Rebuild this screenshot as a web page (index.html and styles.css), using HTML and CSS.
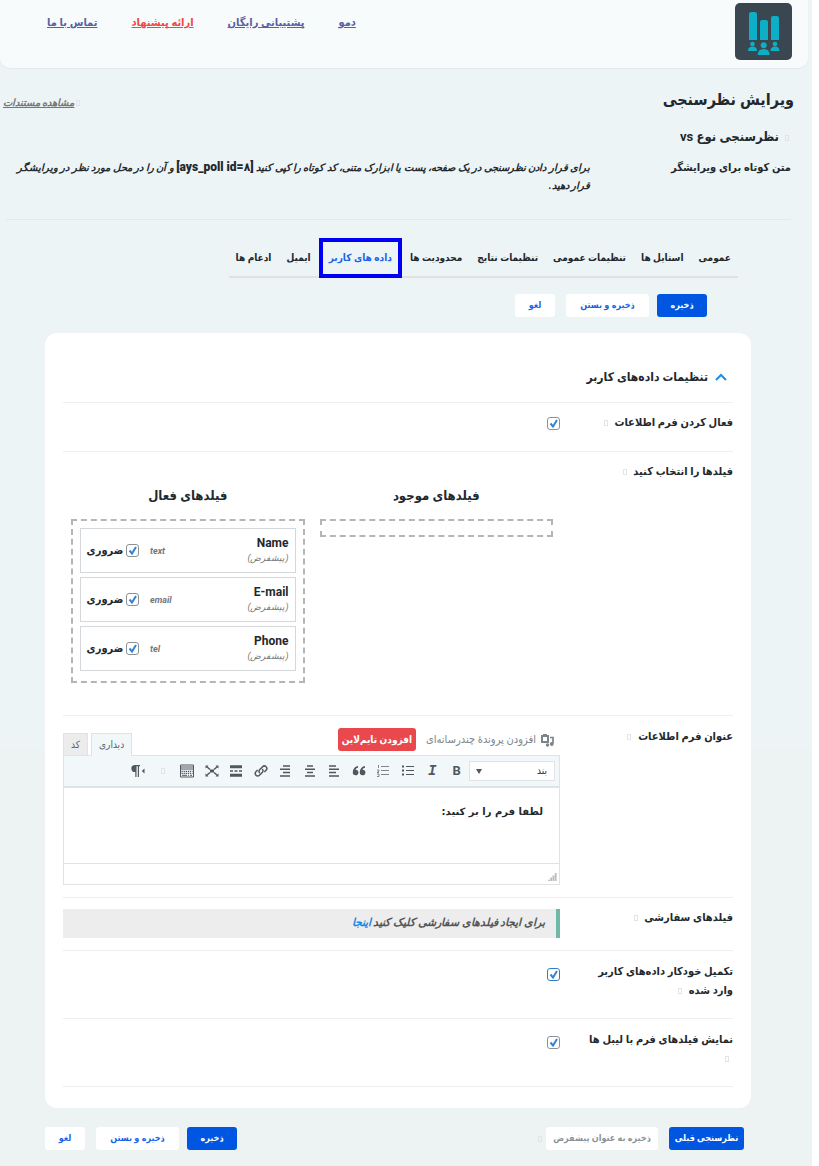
FILE: index.html
```html
<!DOCTYPE html>
<html lang="fa" dir="rtl">
  <head>
    <meta charset="UTF-8" />
    <meta name="viewport" content="width=device-width, initial-scale=1.0" />
    <title>ویرایش نظرسنجی</title>
    <link rel="stylesheet" href="styles.css">
  </head>
  <body>
    <div class="page">
      <header class="top-bar">
        <svg class="logo" viewBox="0 0 57 57" aria-hidden="true">
          <rect width="57" height="57" rx="5" fill="#3a4650" />
          <g fill="#0cafc6">
            <path d="M14 37V11q0-2 2-2h4q2 0 2 2v26z" />
            <path d="M25 37V19q0-2 2-2h4q2 0 2 2v18z" />
            <path d="M36 37V15q0-2 2-2h4q2 0 2 2v22z" />
            <circle cx="17.500" cy="41" r="2.300" />
            <path d="M13 48q0-4.500 4.500-4.500T22 48z" />
            <circle cx="40" cy="41" r="2.300" />
            <path d="M35.500 48q0-4.500 4.500-4.500t4.500 4.500z" />
            <circle cx="28.700" cy="42.300" r="3" />
            <path d="M22.700 52q0-6 6-6t6 6z" />
          </g>
        </svg>
        <nav class="top-nav">
          <a href="#demo">دمو</a>
          <a href="#support">پشتیبانی رایگان</a>
          <a href="#suggest" class="highlight">ارائه پیشنهاد</a>
          <a href="#contact">تماس با ما</a>
        </nav>
      </header>

      <div class="title-row">
        <h1>ویرایش نظرسنجی</h1>
        <p class="docs"><i class="hint"></i><a href="#docs">مشاهده مستندات</a></p>
      </div>

      <section class="intro">
        <h2><i class="hint"></i>نظرسنجی نوع vs</h2>
        <div class="shortcode">
          <h3>متن کوتاه برای ویرایشگر</h3>
          <p>برای قرار دادن نظرسنجی در یک صفحه، پست یا ابزارک متنی، کد کوتاه را کپی کنید <b dir="ltr">[ays_poll id=۸]</b> و آن را در محل مورد نظر در ویرایشگر قرار دهید.</p>
        </div>
      </section>

      <nav class="tabs">
        <a href="#general">عمومی</a>
        <a href="#styles">استایل ها</a>
        <a href="#settings">تنظیمات عمومی</a>
        <a href="#results">تنظیمات نتایج</a>
        <a href="#limits">محدودیت ها</a>
        <a href="#userdata" class="active">داده های کاربر</a>
        <a href="#email">ایمیل</a>
        <a href="#integrations">ادغام ها</a>
      </nav>

      <div class="actions top-actions">
        <button type="button" class="btn primary">ذخیره</button>
        <button type="button" class="btn wide">ذخیره و بستن</button>
        <button type="button" class="btn">لغو</button>
      </div>

      <main class="card">
        <h2 class="card-title">
          <svg viewBox="0 0 12 8" aria-hidden="true"><path d="M1 7l5-5 5 5" /></svg>
          تنظیمات داده‌های کاربر
        </h2>

        <div class="row">
          <label class="row-label" for="enableForm">فعال کردن فرم اطلاعات <i class="hint"></i></label>
          <div><input type="checkbox" id="enableForm" checked /></div>
        </div>

        <div class="row fields-row">
          <div class="row-label">فیلدها را انتخاب کنید <i class="hint"></i></div>
          <div class="fields">
            <section>
              <h3>فیلدهای موجود</h3>
              <div class="drop-zone"></div>
            </section>
            <section>
              <h3>فیلدهای فعال</h3>
              <div class="drop-zone filled">
                <div class="field">
                  <div class="field-name"><b>Name</b><small>(پیشفرض)</small></div>
                  <em>text</em>
                  <label><input type="checkbox" checked /> ضروری</label>
                </div>
                <div class="field">
                  <div class="field-name"><b>E-mail</b><small>(پیشفرض)</small></div>
                  <em>email</em>
                  <label><input type="checkbox" checked /> ضروری</label>
                </div>
                <div class="field">
                  <div class="field-name"><b>Phone</b><small>(پیشفرض)</small></div>
                  <em>tel</em>
                  <label><input type="checkbox" checked /> ضروری</label>
                </div>
              </div>
            </section>
          </div>
        </div>

        <div class="row editor-row">
          <label class="row-label" for="formTitle">عنوان فرم اطلاعات <i class="hint"></i></label>
          <div class="editor">
            <div class="editor-head">
              <button type="button" class="media">
                <svg viewBox="0 0 14 14" aria-hidden="true">
                  <path fill="none" stroke="currentColor" stroke-width="2" d="M2 3h6v6H2z" />
                  <path fill="currentColor" d="M3 1h4v2H3z" />
                  <path fill="none" stroke="currentColor" stroke-width="1.700" d="M10 4.500h3v6" />
                  <circle cx="11.800" cy="11" r="1.900" fill="currentColor" />
                  <circle cx="7.500" cy="12" r="1.700" fill="currentColor" />
                </svg>
                افزودن پروندهٔ چندرسانه‌ای
              </button>
              <button type="button" class="timeline">افزودن تایم‌لاین</button>
              <div class="modes">
                <button type="button" class="current">دیداری</button>
                <button type="button">کد</button>
              </div>
            </div>
            <div class="toolbar">
              <select aria-label="بند">
                <option>بند</option>
              </select>
              <div class="tools">
                <button type="button" aria-label="Bold" class="bold">B</button>
                <button type="button" aria-label="Italic" class="italic">I</button>
                <button type="button" aria-label="Bullets"><svg viewBox="0 0 14 14"><path stroke-width="1" d="M5 2.500h8M5 6.500h8M5 10.500h8" /><path stroke-width="2" d="M1 2.500h2M1 6.500h2M1 10.500h2" /></svg></button>
                <button type="button" aria-label="Numbers"><svg viewBox="0 0 14 14" opacity=".7"><path stroke-width="1" d="M5 2.500h8M5 6.500h8M5 10.500h8M2.500 1v3M1 6h2v1L1 8.500h2M1 10h2v2.500H1" /></svg></button>
                <button type="button" aria-label="Quote"><svg viewBox="0 0 14 14"><path fill="currentColor" stroke="none" d="M6 2C3 2.500 .8 5 .8 8.500A2.800 2.800 0 1 0 3.600 5.700c.2-1 1-1.700 2.400-2zM13 2C10 2.500 7.800 5 7.800 8.500a2.800 2.800 0 1 0 2.800-2.800c.2-1 1-1.700 2.400-2z" /></svg></button>
                <button type="button" aria-label="Left"><svg viewBox="0 0 14 14"><path d="M2 2h7M2 5.300h10M2 8.600h7M2 12h10" /></svg></button>
                <button type="button" aria-label="Center"><svg viewBox="0 0 14 14"><path d="M4 2h6M2 5.300h10M4 8.600h6M2 12h10" /></svg></button>
                <button type="button" aria-label="Right"><svg viewBox="0 0 14 14"><path d="M5 2h7M2 5.300h10M5 8.600h7M2 12h10" /></svg></button>
                <button type="button" aria-label="Link"><svg viewBox="0 0 14 14"><path d="M5.800 9a2.200 2.200 0 0 1-.2-3.200l3-3a2.400 2.400 0 0 1 3.500 3.400L10.300 8M8.200 5a2.200 2.200 0 0 1 .2 3.200l-3 3a2.400 2.400 0 0 1-3.500-3.400L3.700 6" /></svg></button>
                <button type="button" aria-label="More"><svg viewBox="0 0 14 14"><path stroke-width="3" d="M1 2.800h12M1 11.200h12" /><path stroke-width="1.300" d="M1 7h3M5.500 7h3M10 7h3" /></svg></button>
                <button type="button" aria-label="Fullscreen"><svg viewBox="0 0 14 14"><path d="M1.500 2.500L5 5.500M12.500 2.500L9 5.500M1.500 11.500L5 8.500M12.500 11.500L9 8.500" /><path fill="currentColor" stroke="none" d="M5 5.500h4v3H5zM.5 1.500h3l-3 3zM13.500 1.500h-3l3 3zM.5 12.500h3l-3-3zM13.500 12.500h-3l3-3z" /></svg></button>
                <button type="button" aria-label="Toolbar"><svg viewBox="0 0 14 14"><path stroke-width="1" d="M.5 1h13v12H.5zM1 3h12M1 5h12" /><path stroke-width="1.300" stroke-dasharray="1.300 .8" d="M1.500 7.300h11M1.500 9.300h11" /><path stroke-width="1" d="M2 11.300h5M8 11.300h1M10 11.300h2" /></svg></button>
                <button type="button" aria-label="Help"><i class="hint"></i></button>
                <button type="button" aria-label="Direction"><svg viewBox="0 0 14 14"><path fill="currentColor" stroke="none" d="M3.500 1H9v1.300H8V13H6.800V2.300H5.500V13H4.300V8A3.500 3.500 0 0 1 3.500 1zM13.500 4.500v5L10.800 7z" /></svg></button>
              </div>
            </div>
            <textarea id="formTitle">لطفا فرم را بر کنید:</textarea>
            <div class="status">
              <svg viewBox="0 0 10 10" aria-hidden="true"><path d="M1 10V8.500M3.500 10V6M6 10V4M8.500 10V1" /></svg>
            </div>
          </div>
        </div>

        <div class="row custom-row">
          <div class="row-label">فیلدهای سفارشی <i class="hint"></i></div>
          <p class="note">برای ایجاد فیلدهای سفارشی کلیک کنید <a href="#custom">اینجا</a></p>
        </div>

        <div class="row tall-row">
          <label class="row-label" for="autofill">تکمیل خودکار داده‌های کاربر وارد شده <i class="hint"></i></label>
          <div><input type="checkbox" id="autofill" class="focused" checked /></div>
        </div>

        <div class="row tall-row">
          <label class="row-label" for="showLabels">نمایش فیلدهای فرم با لیبل ها <i class="hint"></i></label>
          <div><input type="checkbox" id="showLabels" checked /></div>
        </div>
      </main>

      <footer class="bottom">
        <div class="actions">
          <button type="button" class="btn primary previous">نظرسنجی قبلی</button>
          <button type="button" class="btn default" disabled>ذخیره به عنوان پیشفرض</button>
          <i class="hint"></i>
        </div>
        <div class="actions">
          <button type="button" class="btn primary">ذخیره</button>
          <button type="button" class="btn wide">ذخیره و بستن</button>
          <button type="button" class="btn">لغو</button>
        </div>
      </footer>
    </div>
  </body>
</html>
```
FILE: styles.css
```css
* {
  box-sizing: border-box;
}

body {
  margin: 0;
  background: #ffffff;
  color: #23282d;
  font-family: Roboto, "DejaVu Sans Condensed", "DejaVu Sans", sans-serif;
  font-size: 11px;
  line-height: 18px;
}

h1,
h2,
h3,
p {
  margin: 0;
}

a {
  color: inherit;
}

button,
select,
textarea {
  font: inherit;
  color: inherit;
}

button {
  border: none;
  background: none;
  padding: 0;
  white-space: nowrap;
  cursor: pointer;
}

.page {
  min-height: 100vh;
  margin-right: 7px;
  padding-bottom: 16px;
  background: linear-gradient(#ecf4f6 750px, #edf2f3 750px);
}

/* small empty help marker */
.hint {
  display: inline-block;
  width: 4px;
  height: 6px;
  margin: 0 4px;
  border: 1px solid #e1e5e7;
}

.top-bar {
  display: flex;
  justify-content: space-between;
  height: 68px;
  margin-right: 4px;
  padding: 3px 16px 0 47px;
  background: #f8fbfc;
  border-radius: 0 0 10px 10px;
  box-shadow: 0 1px 1px #e4eaec;
}

.logo {
  width: 57px;
  height: 57px;
}

.top-nav {
  display: flex;
  gap: 34px;
  padding-top: 11px;
  color: #5961a5;
  font-size: 11px;
  font-weight: bold;
  white-space: nowrap;
}

.top-nav .highlight {
  color: #f04747;
}

.title-row {
  display: flex;
  justify-content: space-between;
  align-items: flex-end;
  padding: 20px 18px 0 3px;
}

.title-row h1 {
  font-size: 16px;
  line-height: 24px;
}

.docs {
  color: #777777;
  font-size: 10px;
  font-style: italic;
  font-weight: bold;
}

.docs .hint {
  margin: 0 2px;
}

.intro {
  margin: 0 21px 0 6px;
  padding: 16px 0 24px;
  border-bottom: 1px solid #e4e8ea;
}

.intro h2 {
  font-size: 13px;
}

.intro h2 .hint {
  margin: 0 2px 0 6px;
}

.shortcode {
  display: grid;
  grid-template-columns: 201px 1fr;
  margin-top: 13px;
  padding-left: 4px;
}

.shortcode h3 {
  font-size: 11px;
}

.shortcode p {
  font-size: 10px;
  font-style: italic;
  font-weight: bold;
}

.shortcode b {
  font-size: 12px;
  font-style: normal;
  line-height: 16px;
}

.tabs {
  display: flex;
  gap: 1px;
  width: fit-content;
  height: 40px;
  margin: 18px 74px 0 0;
  border-bottom: 2px solid #e2e0e0;
  font-size: 10px;
  font-weight: bold;
  white-space: nowrap;
}

.tabs a {
  padding: 11px 7px;
  text-decoration: none;
}

.tabs .active {
  height: 40px;
  padding: 7px 6px;
  border: 4px solid #0000f5;
  color: #1a63e8;
}

.actions {
  display: flex;
  align-items: center;
}

.top-actions {
  margin: 16px 105px 16px 0;
}

.btn {
  min-width: 40px;
  height: 23px;
  margin-left: 11px;
  padding: 0 5px;
  border-radius: 3px;
  background: #ffffff;
  color: #1a63e8;
  font-size: 9px;
  font-weight: bold;
  line-height: 23px;
}

.btn:last-child {
  margin-left: 0;
}

.btn.primary {
  min-width: 50px;
  margin-left: 8px;
  background: #0056e0;
  color: #ffffff;
}

.btn.wide {
  min-width: 83px;
}

.btn.previous {
  min-width: 75px;
  margin-left: 11px;
}

.btn.default {
  min-width: 112px;
  margin-left: 0;
  color: #8a9297;
}

.card {
  margin: 0 61px 0 45px;
  padding: 23px 18px 21px;
  border-radius: 12px;
  background: #ffffff;
}

.card-title {
  display: flex;
  align-items: center;
  gap: 7px;
  height: 47px;
  padding: 0 6px 4px 0;
  border-bottom: 1px solid #eeeeee;
  font-size: 12px;
}

.card-title svg {
  width: 12px;
  height: 8px;
  fill: none;
  stroke: #1a8fe8;
  stroke-width: 2;
}

.row {
  display: grid;
  grid-template-columns: 173px 1fr;
  min-height: 49px;
  padding-top: 11px;
  border-bottom: 1px solid #eeeeee;
}

.row-label {
  padding-left: 18px;
  font-size: 11px;
  font-weight: bold;
}

input[type="checkbox"] {
  appearance: none;
  width: 13px;
  height: 13px;
  margin: 0;
  border: 1px solid #8c9196;
  border-radius: 3px;
  background: #ffffff;
  vertical-align: middle;
}

input[type="checkbox"]:checked {
  background-image: url("data:image/svg+xml,%3Csvg xmlns='http://www.w3.org/2000/svg' viewBox='0 0 11 11'%3E%3Cpath d='M2.500 5.500l2.500 3 4-6.500' fill='none' stroke='%233582d4' stroke-width='2'/%3E%3C/svg%3E");
}

input[type="checkbox"].focused {
  border-color: #2f7fc8;
}

.fields-row {
  min-height: 264px;
}

.fields {
  display: grid;
  grid-template-columns: 1fr 1fr;
  gap: 15px;
  padding: 23px 7px 32px 8px;
}

.fields h3 {
  margin-bottom: 13px;
  font-size: 13px;
  line-height: 20px;
  text-align: center;
}

.drop-zone {
  padding: 7px;
  border: 2px dashed #b1b6ba;
}

.filled {
  display: grid;
  gap: 4px;
  padding: 7px 7px 10px;
}

.field {
  display: grid;
  grid-template-columns: 1fr 32px 52px;
  gap: 11px;
  align-items: center;
  height: 45px;
  padding: 0 6px;
  border: 1px solid #d5d8da;
}

.field-name b,
.field-name small {
  display: block;
  line-height: 15px;
}

.field-name b {
  font-size: 12px;
}

.field small,
.field em {
  color: #777777;
  font-size: 9px;
  font-style: italic;
}

.field em {
  direction: ltr;
  font-weight: bold;
}

.field label {
  font-size: 11px;
  font-weight: bold;
  white-space: nowrap;
}

.editor-row {
  padding-top: 12px;
}

.editor {
  padding-bottom: 12px;
}

.editor-head {
  display: flex;
  align-items: flex-start;
  gap: 10px;
  padding-right: 6px;
}

.media {
  display: flex;
  align-items: center;
  gap: 4px;
  height: 23px;
  color: #7c858b;
  font-size: 11px;
}

.media svg {
  width: 14px;
  height: 14px;
}

.timeline {
  height: 23px;
  padding: 0 4px;
  border-radius: 3px;
  background: #e9494c;
  color: #ffffff;
  font-size: 10px;
  font-weight: bold;
}

.modes {
  display: flex;
  gap: 3px;
  margin: 5px auto 0 0;
}

.modes button {
  height: 22px;
  padding: 0 7px;
  border: 1px solid #dfe3e5;
  border-bottom: none;
  background: #ececec;
  color: #555d66;
  font-size: 10px;
}

.modes .current {
  height: 23px;
  margin-bottom: -1px;
  background: #f2f7fa;
}

.toolbar {
  display: flex;
  align-items: center;
  height: 33px;
  padding: 0 4px 0 62px;
  border: 1px solid #dfe3e5;
  border-bottom-width: 2px;
  background: #f2f7fa;
}

.toolbar select {
  appearance: none;
  width: 86px;
  height: 20px;
  padding: 0 7px;
  border: 1px solid #dfe3e5;
  border-radius: 0;
  background: #ffffff url("data:image/svg+xml,%3Csvg xmlns='http://www.w3.org/2000/svg' viewBox='0 0 6 5'%3E%3Cpath d='M0 0h6L3 5z' fill='%2350575e'/%3E%3C/svg%3E") no-repeat 6px 7px / 6px 5px;
  font-size: 10px;
  line-height: 16px;
}

.tools {
  display: flex;
  flex: 1;
  color: #50575e;
}

.tools button {
  display: flex;
  flex: 1;
  justify-content: center;
  align-items: center;
  height: 24px;
}

.tools svg {
  width: 14px;
  height: 14px;
  fill: none;
  stroke: currentColor;
  stroke-width: 1.5;
}

.tools .bold {
  font-size: 13px;
  font-weight: bold;
}

.tools .italic {
  font-family: "Liberation Mono", monospace;
  font-size: 14px;
  font-style: italic;
  font-weight: bold;
}

.editor textarea {
  display: block;
  width: 100%;
  height: 76px;
  padding: 15px 16px;
  border: 1px solid #dfe3e5;
  border-top: none;
  border-radius: 0;
  resize: none;
  font-family: "DejaVu Sans", sans-serif;
  font-size: 10px;
  font-weight: bold;
}

.status {
  height: 21px;
  padding: 8px 2px 0;
  border: 1px solid #dfe3e5;
  border-top: none;
}

.status svg {
  display: block;
  width: 9px;
  height: 9px;
  fill: none;
  stroke: #b9bdc0;
  stroke-width: 2;
}

.note {
  height: 29px;
  margin-bottom: 12px;
  padding: 0 11px;
  border-right: 4px solid #6fb9a6;
  background: #ededed;
  color: #555555;
  font-size: 11px;
  font-style: italic;
  font-weight: bold;
  line-height: 27px;
}

.note a {
  color: #1e88e5;
  text-decoration: none;
}

.tall-row {
  min-height: 68px;
}

.tall-row .row-label {
  line-height: 19px;
}

.tall-row input {
  margin-top: 6px;
}

.bottom {
  display: flex;
  justify-content: space-between;
  margin: 19px 68px 0 45px;
}
```
